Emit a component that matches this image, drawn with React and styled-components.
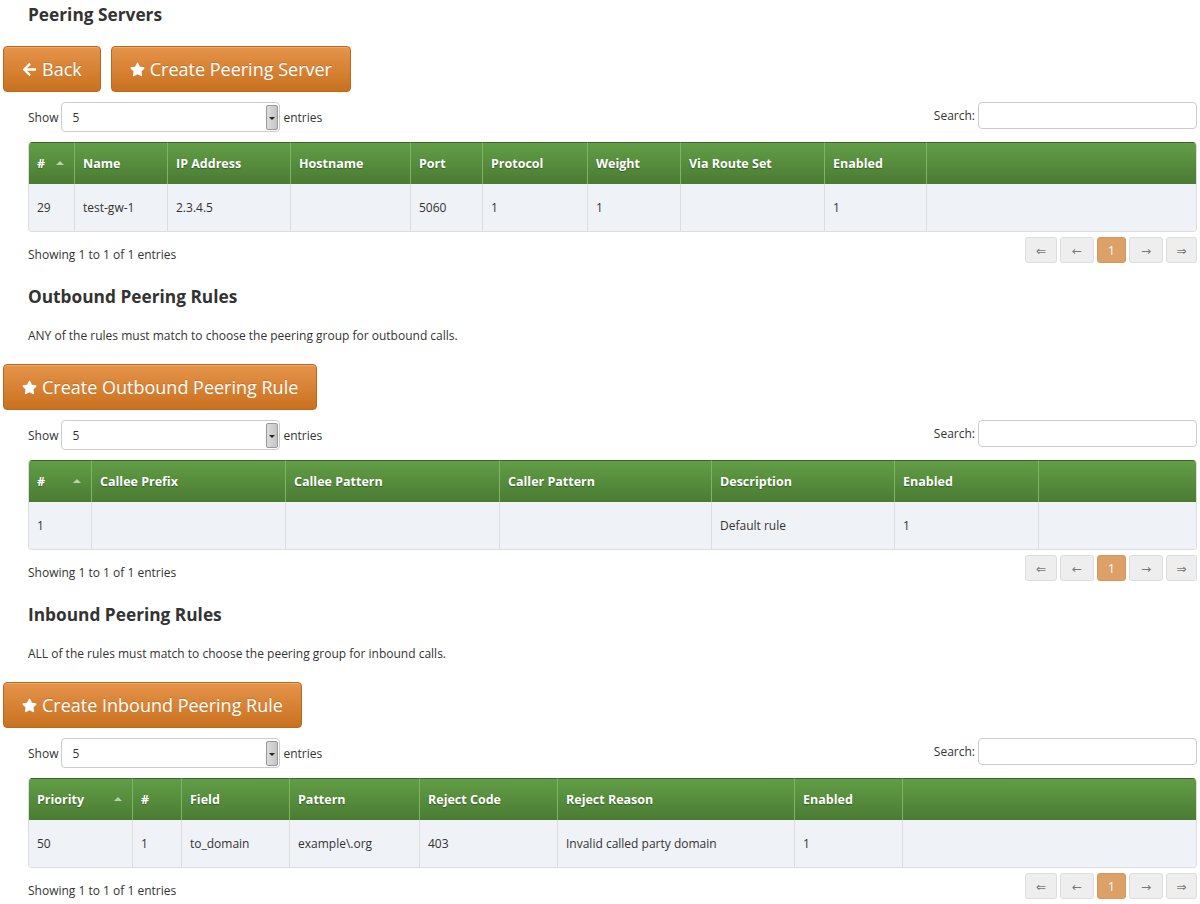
import React from 'react'
import styled, { createGlobalStyle } from 'styled-components'
import { FaArrowLeft, FaStar } from 'react-icons/fa'

const GlobalStyle = createGlobalStyle`
    body{
        margin: 0;
        background: #fff;
        font-family: "Open Sans", "DejaVu Sans", sans-serif;
        color: #333;
    }
`

const servers = {
    cols: [
        { title: '#', w: 45, sort: true },
        { title: 'Name', w: 93 },
        { title: 'IP Address', w: 123 },
        { title: 'Hostname', w: 120 },
        { title: 'Port', w: 72 },
        { title: 'Protocol', w: 105 },
        { title: 'Weight', w: 93 },
        { title: 'Via Route Set', w: 144 },
        { title: 'Enabled', w: 102 },
        { title: '' },
    ],
    rows: [['29', 'test-gw-1', '2.3.4.5', '', '5060', '1', '1', '', '1', '']],
}

const outbound = {
    cols: [
        { title: '#', w: 62, sort: true },
        { title: 'Callee Prefix', w: 194 },
        { title: 'Callee Pattern', w: 214 },
        { title: 'Caller Pattern', w: 212 },
        { title: 'Description', w: 183 },
        { title: 'Enabled', w: 144 },
        { title: '' },
    ],
    rows: [['1', '', '', '', 'Default rule', '1', '']],
}

const inbound = {
    cols: [
        { title: 'Priority', w: 103, sort: true },
        { title: '#', w: 49 },
        { title: 'Field', w: 108 },
        { title: 'Pattern', w: 130 },
        { title: 'Reject Code', w: 138 },
        { title: 'Reject Reason', w: 237 },
        { title: 'Enabled', w: 108 },
        { title: '' },
    ],
    rows: [['50', '1', 'to_domain', 'example\\.org', '403', 'Invalid called party domain', '1', '']],
}

const DataTable = ({ data }) => (
    <>
        <Controls>
            <Label $h={30}>
                Show
                <SelectBox>
                    <SelectValue>5</SelectValue>
                    <SelectArrow />
                </SelectBox>
                entries
            </Label>
            <Label $h={27}>
                Search:
                <SearchInput />
            </Label>
        </Controls>
        <Table>
            <colgroup>
                {data.cols.map((c, i) => (
                    <col key={i} style={c.w ? { width: c.w } : undefined} />
                ))}
            </colgroup>
            <thead>
                <tr>
                    {data.cols.map((c, i) => (
                        <Th key={i}>
                            {c.title}
                            {c.sort && <SortIcon />}
                        </Th>
                    ))}
                </tr>
            </thead>
            <tbody>
                {data.rows.map((r, i) => (
                    <tr key={i}>
                        {r.map((v, j) => (
                            <Td key={j}>{v}</Td>
                        ))}
                    </tr>
                ))}
            </tbody>
        </Table>
        <Footer>
            <Info>Showing 1 to 1 of 1 entries</Info>
            <Pager>
                <PageButton $w={32}>⇐</PageButton>
                <PageButton $w={34}>←</PageButton>
                <PageButton $w={29} $active>1</PageButton>
                <PageButton $w={34}>→</PageButton>
                <PageButton $w={31}>⇒</PageButton>
            </Pager>
        </Footer>
    </>
)

const App = () => {
    return (
        <Page>
            <GlobalStyle />
            <Title>Peering Servers</Title>
            <ButtonBar $top={21}>
                <Button><FaArrowLeft /> Back</Button>
                <Button><FaStar /> Create Peering Server</Button>
            </ButtonBar>
            <Section>
                <DataTable data={servers} />
            </Section>

            <Section>
                <SubTitle>Outbound Peering Rules</SubTitle>
                <Text>ANY of the rules must match to choose the peering group for outbound calls.</Text>
            </Section>
            <ButtonBar>
                <Button><FaStar /> Create Outbound Peering Rule</Button>
            </ButtonBar>
            <Section>
                <DataTable data={outbound} />
            </Section>

            <Section>
                <SubTitle>Inbound Peering Rules</SubTitle>
                <Text>ALL of the rules must match to choose the peering group for inbound calls.</Text>
            </Section>
            <ButtonBar>
                <Button><FaStar /> Create Inbound Peering Rule</Button>
            </ButtonBar>
            <Section>
                <DataTable data={inbound} />
            </Section>
        </Page>
    )
}

//styled components

const Page = styled.div`
    padding: 0 3px 20px 3px;
`

const Title = styled.h1`
    margin: 0 0 0 25px;
    padding-top: 5px;
    font-size: 17.3px;
    line-height: 20px;
    font-weight: bold;
    color: #333;
`

const SubTitle = styled.h2`
    margin: 24px 0 0 0;
    font-size: 17.3px;
    line-height: 20px;
    font-weight: bold;
    color: #333;
`

const Text = styled.p`
    margin: 21px 0 0 0;
    font-size: 12px;
    line-height: 16px;
`

const Section = styled.div`
    padding-left: 25px;
`

const ButtonBar = styled.div`
    display: flex;
    gap: 10px;
    margin-top: ${p => p.$top ?? 20}px;
`

const Button = styled.button`
    display: flex;
    align-items: center;
    gap: 5px;
    height: 46px;
    padding: 0 18px;
    font-family: inherit;
    font-size: 18px;
    color: #fff;
    text-shadow: 0 -1px 0 rgba(0,0,0,0.15);
    background: linear-gradient(to bottom, #e6944b, #c8711f);
    border: 1px solid #b9681d;
    border-radius: 4px;
    box-shadow: inset 0 1px 0 rgba(255,255,255,0.2);
    svg{
        font-size: 15px;
    }
`

const Controls = styled.div`
    display: flex;
    justify-content: space-between;
    align-items: flex-start;
    margin-top: 10px;
    height: 30px;
`

const Label = styled.label`
    display: flex;
    align-items: center;
    gap: 3px;
    height: ${p => p.$h}px;
    font-size: 12px;
    color: #333;
`

const SelectBox = styled.div`
    display: flex;
    align-items: stretch;
    width: 219px;
    height: 30px;
    box-sizing: border-box;
    border: 1px solid #ccc;
    border-radius: 4px;
    background: #fff;
    padding: 2px 1px 1px 0;
`

const SelectValue = styled.span`
    flex: 1;
    display: flex;
    align-items: center;
    padding-left: 10px;
    font-size: 12px;
`

const SelectArrow = styled.span`
    width: 10px;
    position: relative;
    background: linear-gradient(to right, #ddd, #c4c4c4);
    border: 1px solid #999;
    border-radius: 2px;
    &::after{
        content: '';
        position: absolute;
        left: 2px;
        top: 50%;
        margin-top: -1px;
        border-left: 3px solid transparent;
        border-right: 3px solid transparent;
        border-top: 3px solid #222;
    }
`

const SearchInput = styled.input`
    width: 219px;
    height: 27px;
    box-sizing: border-box;
    border: 1px solid #ccc;
    border-radius: 4px;
`

const Table = styled.table`
    width: 100%;
    margin-top: 10px;
    table-layout: fixed;
    border-collapse: separate;
    border-spacing: 0;
    border: 1px solid #ddd;
    border-top: none;
    border-radius: 4px;
    overflow: hidden;
`

const Th = styled.th`
    position: relative;
    height: 41px;
    padding: 0 8px;
    text-align: left;
    font-size: 12.5px;
    font-weight: bold;
    color: #fff;
    text-shadow: 0 1px 1px rgba(0,0,0,0.35);
    background: linear-gradient(to bottom, #629e46, #4a7b33);
    border-top: 1px solid #3f5f30;
    border-left: 1px solid #7fb464;
    &:first-child{
        border-left: none;
    }
`

const SortIcon = styled.span`
    position: absolute;
    right: 10px;
    top: 50%;
    margin-top: -3px;
    border-left: 4px solid transparent;
    border-right: 4px solid transparent;
    border-bottom: 4px solid #b9d4ac;
`

const Td = styled.td`
    height: 47px;
    padding: 0 8px;
    font-size: 12px;
    color: #333;
    background: #eff2f7;
    border-left: 1px solid #ddd;
    &:first-child{
        border-left: none;
    }
`

const Footer = styled.div`
    display: flex;
    justify-content: space-between;
    margin-top: 5px;
    height: 26px;
`

const Info = styled.div`
    padding-top: 10px;
    font-size: 12px;
    line-height: 16px;
`

const Pager = styled.div`
    display: flex;
    gap: 3px;
`

const PageButton = styled.span`
    display: flex;
    align-items: center;
    justify-content: center;
    width: ${p => p.$w}px;
    height: 26px;
    box-sizing: border-box;
    font-size: 12px;
    color: ${p => (p.$active ? '#fff' : '#777')};
    background: ${p => (p.$active ? '#dca068' : '#eee')};
    border: 1px solid ${p => (p.$active ? '#d4975e' : '#ddd')};
    border-radius: 3px;
`

export default App
